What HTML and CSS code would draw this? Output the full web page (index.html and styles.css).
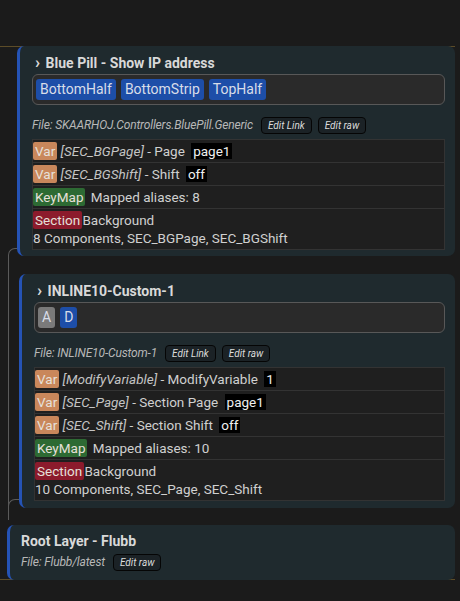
FILE: index.html
```html
<!DOCTYPE html>
<html>
<head>
    <meta charset="UTF-8">
    <meta name="viewport" content="width=device-width, initial-scale=1.0">
    <title>Layers</title>
    <link rel="stylesheet" href="styles.css">
</head>
<body>
    <div class="layers">
        <div class="tree-line"></div>
        <div class="tree-curve"></div>

        <div class="layer layer-nested">
            <div class="layer-title"><span class="chevron">&#8250;</span> Blue Pill - Show IP address</div>
            <div class="tag-box">
                <span class="tag tag-blue">BottomHalf</span>
                <span class="tag tag-blue">BottomStrip</span>
                <span class="tag tag-blue">TopHalf</span>
            </div>
            <div class="file-line">
                <span class="file-name">File: SKAARHOJ.Controllers.BluePill.Generic</span>
                <button class="edit-btn">Edit Link</button>
                <button class="edit-btn">Edit raw</button>
            </div>
            <div class="rows">
                <div class="row"><span class="badge badge-var">Var</span> <i class="var-name">[SEC_BGPage]</i> - Page <span class="value">page1</span></div>
                <div class="row"><span class="badge badge-var">Var</span> <i class="var-name">[SEC_BGShift]</i> - Shift <span class="value">off</span></div>
                <div class="row"><span class="badge badge-keymap">KeyMap</span> Mapped aliases: 8</div>
                <div class="row"><span class="badge badge-section">Section</span> Background<br>8 Components, SEC_BGPage, SEC_BGShift</div>
            </div>
        </div>

        <div class="layer layer-inline">
            <div class="layer-title"><span class="chevron">&#8250;</span> INLINE10-Custom-1</div>
            <div class="tag-box">
                <span class="tag tag-grey">A</span>
                <span class="tag tag-blue">D</span>
            </div>
            <div class="file-line">
                <span class="file-name">File: INLINE10-Custom-1</span>
                <button class="edit-btn">Edit Link</button>
                <button class="edit-btn">Edit raw</button>
            </div>
            <div class="rows">
                <div class="row"><span class="badge badge-var">Var</span> <i class="var-name">[ModifyVariable]</i> - ModifyVariable <span class="value">1</span></div>
                <div class="row"><span class="badge badge-var">Var</span> <i class="var-name">[SEC_Page]</i> - Section Page <span class="value">page1</span></div>
                <div class="row"><span class="badge badge-var">Var</span> <i class="var-name">[SEC_Shift]</i> - Section Shift <span class="value">off</span></div>
                <div class="row"><span class="badge badge-keymap">KeyMap</span> Mapped aliases: 10</div>
                <div class="row"><span class="badge badge-section">Section</span> Background<br>10 Components, SEC_Page, SEC_Shift</div>
            </div>
        </div>

        <div class="layer layer-root">
            <div class="layer-title">Root Layer - Flubb</div>
            <div class="file-line">
                <span class="file-name">File: Flubb/latest</span>
                <button class="edit-btn">Edit raw</button>
            </div>
        </div>
    </div>
</body>
</html>
```

FILE: styles.css
```css
body {
    margin: 0;
    padding: 46px 0 0 0;
    background-color: #1b1b1b;
    font-family: Roboto, "Noto Sans", sans-serif;
    color: #d4d4d4;
}

.layers {
    position: relative;
    width: 455px;
    border-top: 1px solid #5c4c28;
    border-bottom: 1px solid #5c4c28;
    display: flex;
    flex-direction: column;
    gap: 17px;
}

.tree-line {
    position: absolute;
    left: 8px;
    top: 201px;
    width: 10px;
    height: 270px;
    border-left: 1px solid #5a5a5a;
    border-top: 1px solid #5a5a5a;
    border-top-left-radius: 7px;
}

.tree-curve {
    position: absolute;
    left: 8px;
    top: 452px;
    width: 10px;
    height: 20px;
    border-left: 1px solid #5a5a5a;
    border-top: 1px solid #5a5a5a;
    border-top-left-radius: 7px;
}

.layer {
    position: relative;
    background-color: #1f2a2e;
    border-left: 3px solid #2553b5;
    border-radius: 7px;
    padding: 6px 10px 6px 12px;
}

.layer-nested {
    margin: -1px 0 0 17px;
}

.layer-inline {
    margin: 1px 0 0 19px;
    padding-bottom: 7px;
}

.layer-root {
    margin: 0 0 -1px 7px;
    padding: 6px 10px 9px 11px;
}

.layer-title {
    font-weight: bold;
    font-size: 14px;
    line-height: 20px;
    color: #d9d9d9;
    padding-left: 3px;
}

.layer-root .layer-title {
    padding-left: 0;
}

.chevron {
    font-size: 17px;
    margin-right: 2px;
}

.tag-box {
    display: flex;
    gap: 5px;
    background-color: #2a2a2a;
    border: 1px solid #585858;
    border-radius: 6px;
    padding: 4px 3px;
    margin-top: 1px;
}

.tag {
    font-size: 14px;
    line-height: 17px;
    padding: 2px 4px;
    border-radius: 3px;
    color: #d8dde8;
}

.tag-blue {
    background-color: #1d4ea8;
}

.tag-grey {
    background-color: #7a7a7a;
}

.file-line {
    display: flex;
    align-items: center;
    gap: 6px;
    margin-top: 11px;
    height: 18px;
}

.layer-root .file-line {
    margin-top: 2px;
}

.file-name {
    font-style: italic;
    font-size: 12px;
    letter-spacing: -0.15px;
    color: #b8b8b8;
    margin-right: 2px;
}

.edit-btn {
    font-family: inherit;
    font-style: italic;
    font-size: 10px;
    color: #dcdcdc;
    background-color: #1b2226;
    border: 1px solid #050505;
    border-radius: 4px;
    height: 17px;
    padding: 0 6px;
}

.rows {
    margin-top: 5px;
    display: flex;
    flex-direction: column;
}

.row {
    background-color: #1f1f1f;
    border: 1px solid #333;
    margin-top: -1px;
    padding: 2px 0 2px 0;
    font-size: 13.5px;
    line-height: 18px;
    color: #d0d0d0;
}

.row:first-child {
    margin-top: 0;
}

.badge {
    display: inline-block;
    padding: 0 2px;
    border-radius: 2px;
    color: #e6e0da;
}

.badge-var {
    background-color: #c9875b;
}

.badge-keymap {
    background-color: #2d6a33;
    margin-right: 2px;
}

.badge-section {
    background-color: #8c1b2c;
    margin-right: -3px;
}

.var-name {
    color: #c4c4c4;
}

.value {
    background-color: #000;
    color: #f0f0f0;
    padding: 0 2px;
    margin-left: 3px;
}
```
